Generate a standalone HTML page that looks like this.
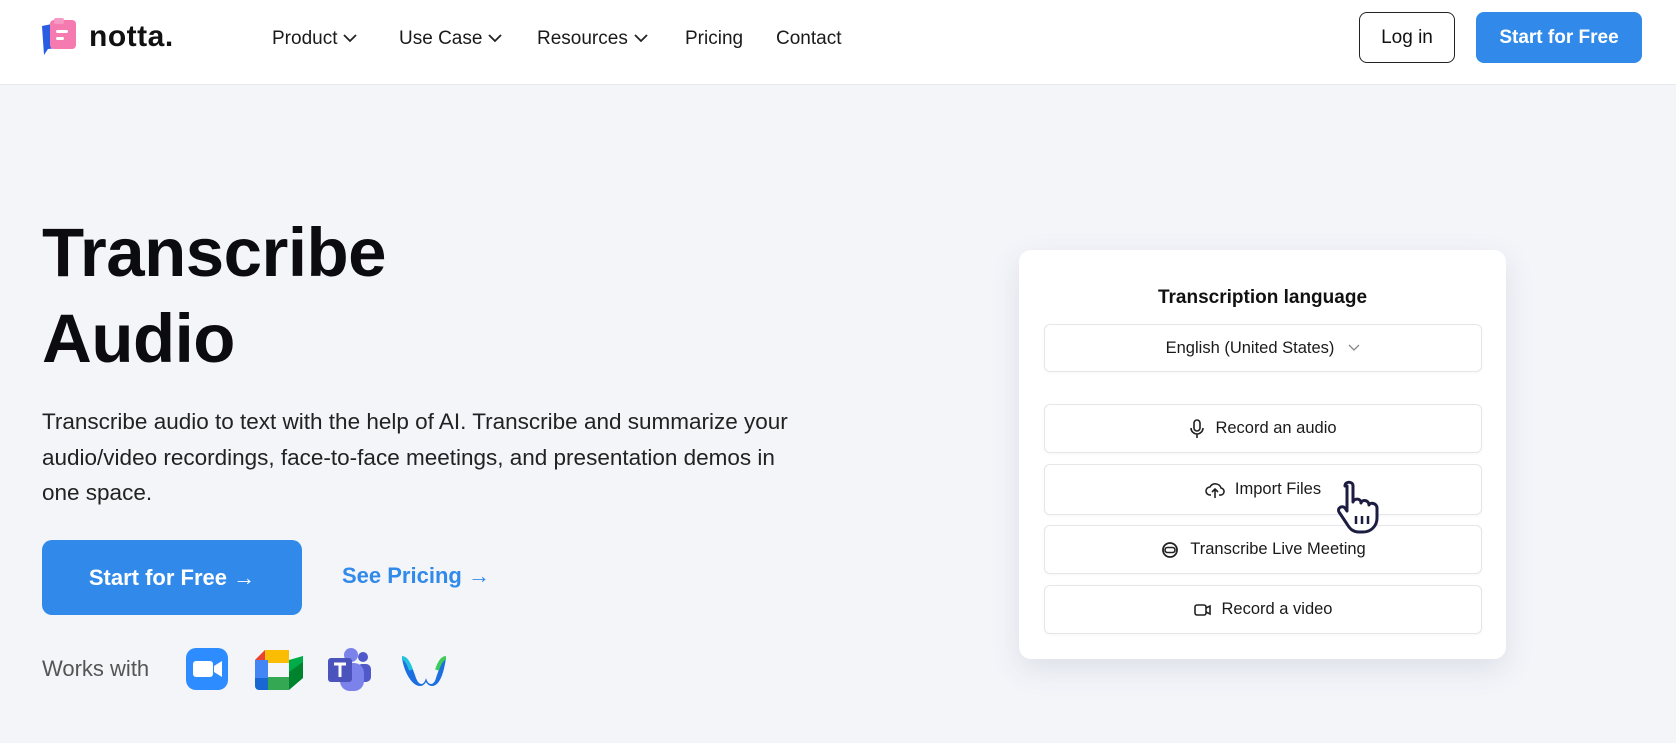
<!DOCTYPE html>
<html><head><meta charset="utf-8"><style>
*{margin:0;padding:0;box-sizing:border-box}
body{width:1676px;height:743px;overflow:hidden;background:#f4f5f9;font-family:"Liberation Sans",sans-serif;color:#111;position:relative}
.hdr{position:absolute;left:0;top:0;width:1676px;height:85px;background:#fff;border-bottom:1px solid #e8e9ee}
.nav{position:absolute;top:28px;font-size:19px;color:#1a1a1a}
.nav svg{vertical-align:middle;margin-left:6px}
.btn{position:absolute;border-radius:8px;font-size:19px;display:flex;align-items:center;justify-content:center}
h1{position:absolute;left:42px;top:210px;font-size:69px;line-height:86px;font-weight:700;color:#0b0b10;letter-spacing:-0.5px}
p.d{position:absolute;left:42px;top:404px;width:760px;font-size:22.5px;line-height:35.5px;color:#222}
.card{position:absolute;left:1019px;top:250px;width:487px;height:409px;background:#fff;border-radius:12px;box-shadow:0 10px 30px rgba(60,70,120,.12)}
.row{position:absolute;left:25px;width:438px;height:49px;border:1px solid #e6e6ea;border-radius:6px;box-shadow:0 1px 3px rgba(0,0,0,.04);display:flex;align-items:center;justify-content:center;font-size:16.5px;color:#1a1a1a}
.row svg{margin-right:10px}
</style></head><body>
<div class="hdr">
<svg style="position:absolute;left:42px;top:18px" width="38" height="38" viewBox="0 0 38 38"><path d="M0 8 L10 6 L16 30 L6 31 L2 37 Z" fill="#2a5be0"/><rect x="8" y="2" width="26" height="29" rx="4" fill="#f47ab0"/><rect x="12" y="0" width="10" height="6" rx="2" fill="#f69ac3"/><rect x="14" y="12" width="12" height="3" rx="1.5" fill="#fff"/><rect x="14" y="19" width="8" height="3" rx="1.5" fill="#fff"/></svg>
<div style="position:absolute;left:89px;top:20px;font-size:30px;font-weight:700;letter-spacing:0.5px;color:#111">notta.</div>
<div class="nav" style="left:272px">Product<svg width="14" height="9"><path d="M1 1l6 6 6-6" stroke="#222" stroke-width="1.8" fill="none"/></svg></div>
<div class="nav" style="left:399px">Use Case<svg width="14" height="9"><path d="M1 1l6 6 6-6" stroke="#222" stroke-width="1.8" fill="none"/></svg></div>
<div class="nav" style="left:537px">Resources<svg width="14" height="9"><path d="M1 1l6 6 6-6" stroke="#222" stroke-width="1.8" fill="none"/></svg></div>
<div class="nav" style="left:685px">Pricing</div>
<div class="nav" style="left:776px">Contact</div>
<div class="btn" style="left:1359px;top:12px;width:96px;height:51px;border:1px solid #222;color:#111">Log in</div>
<div class="btn" style="left:1476px;top:12px;width:166px;height:51px;background:#318ae9;color:#fff;font-weight:700">Start for Free</div>
</div>
<h1>Transcribe<br>Audio</h1>
<p class="d">Transcribe audio to text with the help of AI. Transcribe and summarize your audio/video recordings, face-to-face meetings, and presentation demos in one space.</p>
<div class="btn" style="left:42px;top:540px;width:260px;height:75px;background:#318ae9;color:#fff;font-weight:700;font-size:22px;border-radius:10px">Start for Free&nbsp;<span style="font-weight:400">→</span></div>
<div style="position:absolute;left:342px;top:563px;font-size:22px;font-weight:700;color:#318ae9">See Pricing <span style="font-weight:400">→</span></div>
<div style="position:absolute;left:42px;top:656px;font-size:22px;color:#555">Works with</div>
<svg style="position:absolute;left:186px;top:648px" width="42" height="42"><rect width="42" height="42" rx="10" fill="#2d8cff"/><rect x="7" y="13" width="20" height="16" rx="3" fill="#fff"/><path d="M28 18l8-5v16l-8-5z" fill="#fff"/></svg>
<svg style="position:absolute;left:255px;top:650px" width="48" height="40" viewBox="0 0 48 40"><path d="M0 10L10 0h24v13H13v14H0z" fill="#fbbc04"/><path d="M0 10L10 0v10z" fill="#ea4335"/><rect x="0" y="10" width="13" height="18" fill="#4285f4"/><path d="M0 28h13v12H4a4 4 0 01-4-4z" fill="#1967d2"/><rect x="13" y="27" width="21" height="13" fill="#34a853"/><path d="M34 13v27l14-12V6z" fill="#00832d"/><path d="M34 10l14-4v6l-14 10z" fill="#00ac47"/></svg>
<svg style="position:absolute;left:327px;top:646px" width="48" height="46"><circle cx="36" cy="11" r="5" fill="#5059c9"/><rect x="30" y="18" width="14" height="18" rx="5" fill="#5059c9"/><circle cx="24" cy="9" r="7" fill="#7b83eb"/><rect x="13" y="17" width="24" height="28" rx="10" fill="#7b83eb"/><rect x="1" y="12" width="24" height="24" rx="3" fill="#4b53bc"/><path d="M7 18h12M13 18v13" stroke="#fff" stroke-width="3"/></svg>
<svg style="position:absolute;left:400px;top:652px" width="48" height="36" viewBox="0 0 48 36"><path d="M2 6c6-2 10 8 14 20 3 8 8 8 10 0 2 8 8 8 10 0 4-12 8-22 10-20-2 14-6 28-14 28-4 0-6-4-6-4s-2 4-6 4C12 34 4 20 2 6z" fill="#1b6fe0"/><path d="M2 6c4 0 7 6 9 12" stroke="#20c2e0" stroke-width="4" fill="none"/><path d="M46 6c-4 0-7 6-9 12" stroke="#3fcb5a" stroke-width="4" fill="none"/></svg>
<div class="card">
<div style="position:absolute;left:0;width:100%;top:37px;text-align:center;font-size:19px;font-weight:700">Transcription language</div>
<div class="row" style="top:74px;height:48px">English (United States)<svg style="margin:0 0 0 14px" width="12" height="8"><path d="M1 1l5 5 5-5" stroke="#888" stroke-width="1.3" fill="none"/></svg></div>
<div class="row" style="top:154px"><svg width="16" height="20" viewBox="0 0 16 20"><rect x="5" y="1" width="6" height="11" rx="3" stroke="#222" stroke-width="1.6" fill="none"/><path d="M2 9a6 6 0 0012 0M8 15v4" stroke="#222" stroke-width="1.6" fill="none"/></svg>Record an audio</div>
<div class="row" style="top:214px;height:51px"><svg width="20" height="18" viewBox="0 0 20 18"><path d="M6 14H5a4 4 0 010-8 6 6 0 0111 1 3.5 3.5 0 01-1 7h-1M10 9v8M7 11l3-3 3 3" stroke="#222" stroke-width="1.6" fill="none"/></svg>Import Files</div>
<div class="row" style="top:275px"><svg width="20" height="20" viewBox="0 0 20 20"><circle cx="10" cy="10" r="7" stroke="#222" stroke-width="1.8" fill="none"/><rect x="5" y="7.5" width="10" height="5" rx="2.5" stroke="#222" stroke-width="1.6" fill="none"/></svg>Transcribe Live Meeting</div>
<div class="row" style="top:335px"><svg width="18" height="14"><rect x="1" y="2" width="11" height="10" rx="2" stroke="#222" stroke-width="1.6" fill="none"/><path d="M12 5l4-2v8l-4-2" stroke="#222" stroke-width="1.6" fill="none"/></svg>Record a video</div>
<svg style="position:absolute;left:318px;top:230px" width="48" height="54" viewBox="0 0 48 54"><path d="M8 6c0-5 8-5 8 0v16c1-4 8-4 8 1 1-4 8-3 8 2 1-3 8-2 8 3v10c0 8-6 14-14 14h-4c-6 0-9-3-12-8L2 32c-2-4 3-7 6-4l2 3V6z" fill="#fff" stroke="#1c1d40" stroke-width="3" stroke-linejoin="round"/><path d="M19 36v8M25 36v8M31 36v8" stroke="#1c1d40" stroke-width="2.5"/></svg>
</div>
</body></html>
